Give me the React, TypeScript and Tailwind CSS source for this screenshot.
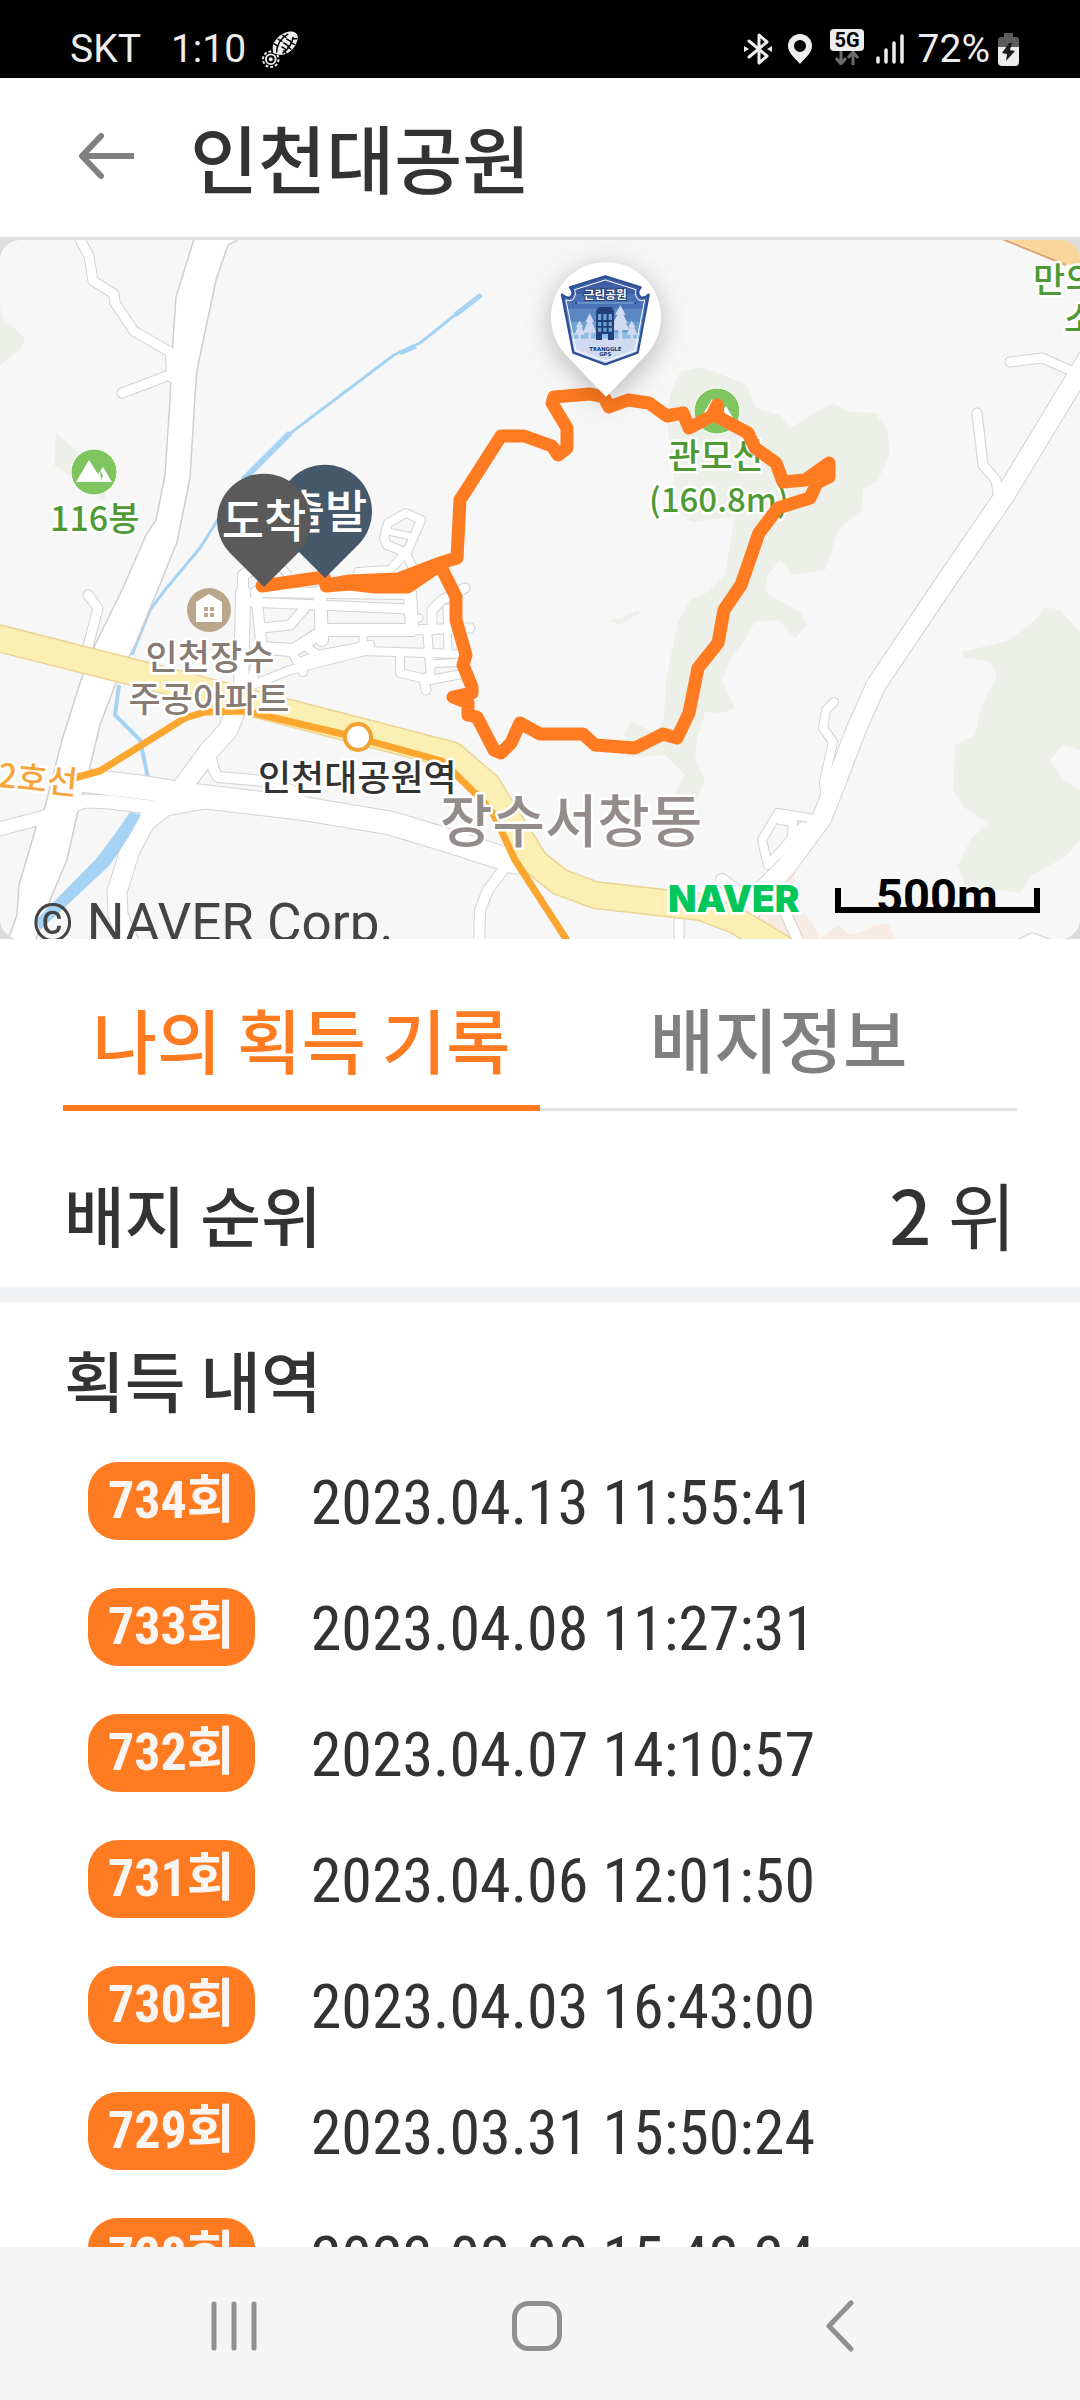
import { useState } from 'react';

interface BadgeRecord {
  count: number;
  date: string;
}

const records: BadgeRecord[] = [
  { count: 734, date: '2023.04.13 11:55:41' },
  { count: 733, date: '2023.04.08 11:27:31' },
  { count: 732, date: '2023.04.07 14:10:57' },
  { count: 731, date: '2023.04.06 12:01:50' },
  { count: 730, date: '2023.04.03 16:43:00' },
  { count: 729, date: '2023.03.31 15:50:24' },
  { count: 728, date: '2023.03.30 15:43:34' },
];

// [points, width]
const roads: [string, number][] = [
  ['78,236 89,256 93,281 114,294 115,303 134,331 170,352 172,378', 9],
  ['122,393 172,374', 9],
  ['88,595 98,608 87,650', 9],
  ['240,700 228,730 208,752 192,774 180,790 165,806 145,822 130,850 117,892 118,915 130,945', 19],
  ['80,780 140,787 190,795 232,800 300,808 390,823 440,838 515,862', 23],
  ['-5,830 45,817 85,801 110,802 165,809 215,800', 13],
  ['210,755 214,770 218,777 275,782 300,795', 10],
  ['503,870 488,890 480,910 479,945', 10],
  ['1088,358 1005,495 940,590 876,685 856,730 835,785 822,818 785,868 765,888 745,920', 19],
  ['1010,362 1042,358 1074,372', 9],
  ['977,413 983,465 996,480 999,500', 9],
  ['834,702 826,710 823,728 833,742 824,782 826,800', 8],
  ['810,818 778,813 762,840 768,865 803,826', 8],
  ['780,820 793,822 791,846', 8],
  ['722,880 735,890', 12],
  ['782,905 800,945', 10],
  ['679,920 679,945', 9],
  ['1020,944 1032,938 1048,944', 9],
];

const streets: [string, number][] = [
  ['243,592 241,690', 14],
  ['243,600 243,575 252,570', 10],
  ['256,592 262,650 250,685', 10],
  ['256,592 410,594', 10],
  ['250,602 410,609', 9],
  ['262,628 290,625 305,608', 9],
  ['320,592 322,640', 12],
  ['262,648 294,650 325,630 412,630', 12],
  ['410,592 412,630', 12],
  ['410,618 419,618', 7],
  ['300,662 318,655 370,645', 8],
  ['308,648 318,655', 8],
  ['250,686 290,670 365,651 460,654', 8],
  ['292,652 303,672', 8],
  ['363,632 363,650', 7],
  ['400,655 400,673 430,680 462,674', 8],
  ['424,678 426,690', 9],
  ['427,630 431,678', 8],
  ['447,608 448,652', 7],
  ['412,630 470,628', 9],
  ['432,630 432,610 442,600 465,588', 9],
  ['430,664 466,662', 7],
  ['358,572 390,570 408,550 421,520 406,513 388,523 384,538 387,545 405,552 418,578', 8],
  ['386,531 414,537', 6],
  ['262,578 262,565 275,560 288,575', 7],
];

const track =
  '262,586 324,577 326,585 350,581 398,579 440,563 457,558 460,500 501,436 524,436 552,446 558,455 567,448 567,428 552,403 554,397 590,394 604,397 609,407 628,400 649,403 667,416 683,413 689,428 712,416 717,405 718,417 748,433 755,448 776,463 783,482 805,480 829,463 829,477 817,483 810,498 778,508 759,533 741,585 724,610 718,643 698,668 689,713 677,738 663,734 635,748 595,745 583,734 540,734 520,723 511,743 501,753 494,750 477,717 468,715 468,703 453,697 472,693 472,687 463,665 466,655 456,620 456,597 440,565 408,587 375,587 350,584 326,586';

function MountainIcon({ x, y }: { x: number; y: number }) {
  return (
    <g transform={`translate(${x} ${y})`}>
      <circle r="23" fill="#7fc55f" stroke="#fff" strokeWidth="1" />
      <path d="M-18 10 L-5 -12 L4 2 L9 -5 L18 10 Z" fill="#fff" />
      <path d="M6 -2 L9 4 L7 8 Z" fill="#7fc55f" />
    </g>
  );
}

function LabelPin({ x, y, fill, label }: { x: number; y: number; fill: string; label: string }) {
  return (
    <g transform={`translate(${x} ${y})`}>
      <path d="M0 67 L-35 32 A47 47 0 1 1 35 32 Z" fill={fill} />
      <text y="17" textAnchor="middle" fontSize="46" fontWeight="500" fill="#fff">
        {label}
      </text>
    </g>
  );
}

function BadgePin() {
  return (
    <g>
      <path
        d="M606 397 L566 355 A55 55 0 1 1 646 355 Z"
        fill="#fff"
        className="drop-shadow-[0_6px_14px_rgba(0,0,0,0.25)]"
      />
      <g transform="translate(530 250) scale(0.3333)">
        <clipPath id="shield">
          <path d="M226 79 L332 112 Q317 128 332 142 Q345 146 356 134 L323 308 L226 343 L130 308 L96 134 Q108 146 121 142 Q135 128 120 112 Z" />
        </clipPath>
        <g clipPath="url(#shield)">
          <rect x="90" y="70" width="280" height="280" fill="#d0dbf1" />
          <rect x="90" y="70" width="280" height="196" fill="#8cbce6" />
          <rect x="90" y="70" width="280" height="178" fill="#6fa0d2" />
          <rect x="90" y="70" width="280" height="145" fill="#5b87c2" />
          <rect x="90" y="70" width="280" height="106" fill="#4a72b4" />
          <rect x="90" y="70" width="280" height="62" fill="#3f60a5" />
          <path
            d="M148 212 l-10 20 h5 l-10 22 h12 v14 h8 v-14 h12 l-10 -22 h5 Z M179 190 l-13 26 h6 l-13 32 h16 v20 h8 v-20 h16 l-13 -32 h6 Z M271 166 l-16 28 h7 l-13 26 h6 l-12 20 h22 v28 h12 v-28 h24 l-14 -20 h6 l-13 -26 h7 Z M305 212 l-10 20 h5 l-10 22 h12 v14 h8 v-14 h12 l-10 -22 h5 Z"
            fill="#d0dbf1"
          />
          <path d="M198 270 V182 L206 171 H244 L252 182 V270 H234 V252 H216 V270 Z" fill="#213f78" />
          <path
            d="M204 192h10v18h-10z M220 192h10v18h-10z M236 192h10v18h-10z M204 216h10v12h-10z M220 216h10v12h-10z M236 216h10v12h-10z M204 233h10v12h-10z M220 233h10v12h-10z M236 233h10v12h-10z"
            fill="#6fa0d2"
          />
        </g>
        <path
          d="M226 79 L332 112 Q317 128 332 142 Q345 146 356 134 L323 308 L226 343 L130 308 L96 134 Q108 146 121 142 Q135 128 120 112 Z"
          fill="none"
          stroke="#2f5096"
          strokeWidth="7"
          strokeLinejoin="round"
        />
        <path
          d="M226 90 L318 119 Q312 138 326 150 Q336 154 344 150 L315 302 L226 333 L138 302 L108 150 Q118 154 127 150 Q140 138 134 119 Z"
          fill="none"
          stroke="#fff"
          strokeWidth="3"
        />
        <path d="M140 159 H312" stroke="#7fb0dc" strokeWidth="3" />
        <circle cx="138" cy="159" r="3" fill="#213f78" />
        <circle cx="316" cy="159" r="3" fill="#213f78" />
        <text
          x="226"
          y="148"
          textAnchor="middle"
          fontSize="35"
          fontWeight="700"
          fill="#fff"
          stroke="#213f78"
          strokeWidth="6"
          className="[paint-order:stroke]"
        >
          근린공원
        </text>
        <g fill="#213f78" textAnchor="middle" fontWeight="700" fontSize="16" className="font-['DejaVu_Sans',sans-serif]">
          <text x="226" y="303">TRANGGLE</text>
          <text x="226" y="318">GPS</text>
        </g>
      </g>
    </g>
  );
}

function TrackMap() {
  return (
    <svg
      viewBox="0 240 1080 699"
      className="block h-auto w-full rounded-[20px] bg-[#f7f7f7] font-['Noto_Sans_CJK_KR',sans-serif]"
      role="img"
      aria-label="인천대공원"
    >
      {/* forest */}
      <g fill="#ecf0e8">
        <path d="M680 372 L672 390 L667 410 L668 430 L675 490 L680 512 L692 522 L735 516 L725 575 L708 592 L690 600 L678 622 L672 650 L666 680 L664 720 L655 733 L632 722 L624 733 L628 745 L625 757 L665 755 L685 775 L675 795 L697 798 L705 780 L695 760 L697 740 L705 712 L722 713 L735 708 L722 680 L730 660 L745 640 L755 622 L778 620 L795 638 L807 625 L800 612 L765 592 L768 575 L780 560 L793 575 L825 570 L832 550 L838 530 L862 510 L863 490 L878 480 L890 455 L887 428 L875 413 L850 412 L832 403 L815 413 L790 428 L780 415 L755 408 L747 385 L720 374 L700 367 Z" />
        <path d="M1045 607 L1035 620 L1010 640 L962 652 L965 658 L990 662 L997 675 L982 705 L975 735 L955 745 L953 790 L965 808 L988 823 L970 840 L958 865 L965 885 L1020 893 L1032 875 L1065 857 L1080 840 V790 L1063 780 L1050 760 L1063 745 L1080 750 V632 L1060 610 Z" />
        <path d="M0 305 L2 318 L25 338 L22 348 L0 365 Z M56 433 L70 445 L110 480 L104 500 L54 465 Z M610 620 L622 618 L638 610 L640 613 L620 625 Z" />
      </g>
      <path
        d="M786 866 L797 858 L792 900 L812 922 L820 939 L838 925 L850 935 L868 930 L872 926 L888 923 L895 939 H770 L745 915 Z"
        fill="#f8ebe3"
      />
      <path d="M1000 236 L1066 264 L1084 268 V236 Z" fill="#fad59a" />
      <path d="M1000 238 L1066 265" stroke="#dba36c" strokeWidth="2" />

      {/* water */}
      <g fill="none" stroke="#a6d3f4" strokeLinejoin="round">
        <path d="M481 295 L455 315 L420 343 L394 355 L345 392 L288 435" strokeWidth="3" />
        <path d="M455 315 L481 295 M416 346 L400 353" strokeWidth="5" />
        <path d="M290 433 L268 455 L243 480" strokeWidth="6" />
        <path d="M244 478 L200 548 L165 590 L150 610 L132 655" strokeWidth="3" />
        <path d="M119 685 L115 715 L140 740 L148 778" strokeWidth="4" />
      </g>

      {/* roads */}
      <g fill="none" strokeLinecap="round" strokeLinejoin="round">
        {[...roads, ...streets].map(([points, width]) => (
          <polyline key={points} points={points} stroke="#d2d2d2" strokeWidth={width + 2} />
        ))}
      </g>
      <path
        d="M195 236 L176 297 L172 355 L170 400 L165 475 L156 520 L146 535 L122 590 L95 645 L81 680 L62 740 L45 807 L37 824 L19 885 L17 915 L6 945 H34 L52 895 L67 860 L77 815 L88 775 L100 725 L117 680 L135 645 L161 582 L177 542 L190 478 L195 395 L197 370 L216 280 L228 245 L245 236 Z"
        fill="#fff"
        stroke="#cfcfcf"
        strokeWidth="1.5"
      />
      <g fill="none" stroke="#fff" strokeLinecap="round" strokeLinejoin="round">
        {[...roads, ...streets].map(([points, width]) => (
          <polyline key={points} points={points} strokeWidth={width} />
        ))}
      </g>
      <path d="M130 812 L141 815 L128 838 L110 865 L64 908 L40 930 L36 920 L95 860 L112 838 Z" fill="#a6d3f4" />

      {/* trunk road and metro line */}
      <g fill="none" strokeLinejoin="round">
        <polyline
          points="-10,636 140,674 290,713 452,755 487,785 512,825 535,862 560,882 595,895 700,907 735,920 785,950"
          stroke="#ead594"
          strokeWidth="28"
        />
        <polyline
          points="-10,636 140,674 290,713 452,755 487,785 512,825 535,862 560,882 595,895 700,907 735,920 785,950"
          stroke="#fcefb4"
          strokeWidth="25"
        />
        <polyline
          points="74,778 100,771 185,718 205,712 245,711 355,737 442,761 482,800 494,815 515,860 570,945"
          stroke="#faa62f"
          strokeWidth="7"
        />
      </g>
      <circle cx="358" cy="737" r="13" fill="#fff" stroke="#f2a02f" strokeWidth="4" />

      <MountainIcon x={94} y={472} />
      <MountainIcon x={717} y={411} />
      <circle cx="209" cy="610" r="22" fill="#baa68a" />
      <path d="M196 622 V602 L209 594 L222 602 V622 Z" fill="#fff" />
      <path d="M204 607h4v4h-4z M210 607h4v4h-4z M204 613h4v4h-4z M210 613h4v4h-4z" fill="#baa68a" />

      {/* place names */}
      <g stroke="#fff" strokeWidth="5" strokeLinejoin="round" fontWeight="500" className="[paint-order:stroke]">
        <g fill="#4f9a35" fontSize="35">
          <text x="50" y="531" fontSize="34">116봉</text>
          <text x="668" y="469">관모산</text>
          <text x="649" y="512" fontSize="33">(160.8m)</text>
          <text x="1033" y="293">만의</text>
          <text x="1064" y="332">소</text>
        </g>
        <g fill="#877b74" fontSize="35" textAnchor="middle">
          <text x="210" y="670">인천장수</text>
          <text x="209" y="712">주공아파트</text>
        </g>
        <text x="258" y="791" fill="#333" fontSize="36">인천대공원역</text>
        <text x="-3" y="787" fill="#f7a43c" fontSize="33" transform="rotate(6 0 787)">2호선</text>
        <text x="440" y="842" fill="#948c8b" fontSize="57">장수서창동</text>
      </g>

      <polyline
        points={track}
        fill="none"
        stroke="#ff7b22"
        strokeWidth="13"
        strokeLinecap="round"
        strokeLinejoin="round"
      />
      <LabelPin x={325} y={511} fill="#45596b" label="출발" />
      <LabelPin x={264} y={520} fill="#5a5a5a" label="도착" />
      <BadgePin />

      <text
        x="668"
        y="912"
        fontSize="37"
        fontWeight="900"
        fill="#03c75a"
        stroke="#fff"
        strokeWidth="5"
        className="font-['Inter',sans-serif] [paint-order:stroke]"
      >
        NAVER
      </text>
      <text x="876" y="912" fontSize="47" fontWeight="700" className="font-['Roboto',sans-serif]">500m</text>
      <path d="M838 888 V910 H1037 V888" fill="none" stroke="#000" strokeWidth="6" />
      <text x="32" y="941" fontSize="53" fill="#444" className="font-['Roboto',sans-serif]">© NAVER Corp.</text>
    </svg>
  );
}

function StatusBar() {
  return (
    <div className="flex h-[78px] shrink-0 items-center justify-between bg-black pt-5 pr-[61px] pl-[70px] font-['Roboto',sans-serif] text-[39px] leading-none text-[#ededed]">
      <div className="flex items-center">
        <span>SKT</span>
        <span className="ml-[30px]">1:10</span>
        {/* shoe print */}
        <svg viewBox="0 0 38 38" className="ml-4 size-[37px]" fill="none">
          <path d="M12 22 C8 14 16 4 26 1 C36 -1 39 5 35 13 C31 22 20 28 12 22 Z" fill="#ededed" />
          <path d="M15 22 C15 14 20 7 27 3 M21 23 C25 20 31 14 32 6" stroke="#000" strokeWidth="1.5" />
          <path d="M12 13 l5 3 M16 8 l5 3 M21 4 l4 3 M36 8 l-5 0 M34 14 l-5 -2 M30 19 l-4 -3 M25 23 l-3 -3 M20 16 l6 4 M22 12 l6 4 M25 8 l5 3" stroke="#000" strokeWidth="1.5" />
          <circle cx="9" cy="29" r="5" stroke="#ededed" strokeWidth="2" />
          <circle cx="9" cy="29" r="8" stroke="#ededed" strokeWidth="2" strokeDasharray="3 2" />
          <circle cx="9" cy="29" r="2" fill="#ededed" />
        </svg>
      </div>
      <div className="flex items-center">
        <svg viewBox="0 0 28 34" className="h-[34px] w-7" fill="none" stroke="#ededed" strokeWidth="3" strokeLinejoin="round" strokeLinecap="round">
          <path d="M5 9 L23 24 L15 31 V3 L23 10 L5 25" />
          <path d="M0 14 V20 L5 17 Z M28 14 V20 L23 17 Z" fill="#ededed" stroke="none" />
        </svg>
        <svg viewBox="0 0 24 30" className="ml-4 h-[30px] w-6">
          <path d="M12 0 A12 12 0 0 1 24 12 C24 19 17 24 12 30 C7 24 0 19 0 12 A12 12 0 0 1 12 0 Z M12 6 A6 6 0 1 0 12 18 A6 6 0 1 0 12 6 Z" fill="#ededed" />
        </svg>
        <div className="ml-[18px] flex flex-col items-center pb-1">
          <span className="rounded-sm bg-[#ededed] px-1 text-[20px] leading-[22px] font-bold text-black">5G</span>
          <svg viewBox="0 0 24 14" className="h-[14px] w-6" fill="none" stroke="#6b6b6b" strokeWidth="3">
            <path d="M6 0 V12 M1 7 L6 13 L11 7 M18 14 V2 M13 7 L18 1 L23 7" />
          </svg>
        </div>
        <svg viewBox="0 0 28 30" className="ml-3 h-[30px] w-7" stroke="#ededed" strokeWidth="3.500" strokeLinecap="round">
          <path d="M2 24 V28 M10 16 V28 M18 9 V28 M26 2 V28" />
        </svg>
        <span className="ml-[14px]">72%</span>
        <svg viewBox="0 0 21 33" className="ml-2 h-[33px] w-[21px]">
          <path d="M6 0 H15 V4 H18 Q21 4 21 7 V14 H0 V7 Q0 4 3 4 H6 Z" fill="#5c5c5c" />
          <path d="M0 14 H21 V29 Q21 33 17 33 H4 Q0 33 0 29 Z" fill="#ededed" />
          <path d="M11 10 H14 L12 17 L17 18 L8 28 L9 21 L4 20 Z" fill="#1c1c1c" />
        </svg>
      </div>
    </div>
  );
}

export default function App() {
  const [tab, setTab] = useState<'record' | 'info'>('record');

  return (
    <div className="flex h-screen flex-col bg-white font-['Noto_Sans_CJK_KR',sans-serif] text-[#333]">
      <StatusBar />

      <header className="flex h-[162px] shrink-0 items-center border-b-3 border-[#e2e2e2] pb-1 pl-[78px]">
        <button aria-label="뒤로" className="cursor-pointer">
          <svg viewBox="0 0 56 46" className="h-[46px] w-14" fill="none" stroke="#808080" strokeWidth="6" strokeLinecap="round" strokeLinejoin="round">
            <path d="M23 3 L4 23 L23 43" />
            <path d="M4 23 H56" strokeLinecap="butt" />
          </svg>
        </button>
        <h1 className="ml-14 text-[74px] leading-none font-medium">인천대공원</h1>
      </header>

      <div className="shrink-0 bg-[#dcdcdc]">
        <TrackMap />
      </div>

      <main className="flex min-h-0 flex-1 flex-col overflow-hidden">
        <div role="tablist" className="mx-[63px] grid shrink-0 grid-cols-2 text-[70px] leading-[100px] font-medium">
          <button
            role="tab"
            aria-selected={tab === 'record'}
            onClick={() => setTab('record')}
            className={`flex h-[172px] cursor-pointer items-end justify-center ${
              tab === 'record' ? 'border-b-6 border-[#ff7b22] pb-4 text-[#ff7b22]' : 'border-b-3 border-[#e2e2e2] pb-5 text-[#808080]'
            }`}
          >
            나의 획득 기록
          </button>
          <button
            role="tab"
            aria-selected={tab === 'info'}
            onClick={() => setTab('info')}
            className={`flex h-[172px] cursor-pointer items-end justify-center ${
              tab === 'info' ? 'border-b-6 border-[#ff7b22] pb-4 text-[#ff7b22]' : 'border-b-3 border-[#e2e2e2] pb-5 text-[#808080]'
            }`}
          >
            배지정보
          </button>
        </div>

        {/* Rank */}
        <section className="flex h-[191px] shrink-0 items-center justify-between border-b-15 border-[#f1f2f4] px-16 pt-7">
          <h2 className="text-[66px] leading-none font-medium">배지 순위</h2>
          <p className="text-[74px] leading-none">
            <span className="font-medium">2</span> 위
          </p>
        </section>

        {/* History */}
        <section className="shrink-0">
          <h2 className="px-16 pt-7 pb-9 text-[66px] leading-[96px] font-medium">획득 내역</h2>
          <ul className="grid gap-12 pl-[88px]">
            {records.map((record) => (
              <li key={record.count} className="flex items-center gap-14">
                <span className="flex h-[78px] items-center rounded-[30px] bg-[#ff7b22] px-5 font-['Roboto_Condensed','Liberation_Sans_Narrow','Noto_Sans_CJK_KR',sans-serif] text-[52px] leading-none font-bold text-[#f8f5f2]">
                  {record.count}회
                </span>
                <time className="pt-1 font-['Roboto_Condensed','Liberation_Sans_Narrow','Roboto',sans-serif] text-[62px] leading-none">
                  {record.date}
                </time>
              </li>
            ))}
          </ul>
        </section>
      </main>

      <nav className="grid h-[153px] shrink-0 grid-cols-3 place-items-center bg-[#f5f5f5] pt-1 pr-[89px] pl-[83px]">
        <button aria-label="최근 앱">
          <svg viewBox="0 0 46 50" className="h-[50px] w-[46px]" stroke="#909090" strokeWidth="5" strokeLinecap="round">
            <path d="M3 3 V47 M23 3 V47 M43 3 V47" />
          </svg>
        </button>
        <button aria-label="홈">
          <svg viewBox="0 0 50 50" className="size-[50px]" fill="none" stroke="#909090" strokeWidth="5">
            <rect x="2.500" y="2.500" width="45" height="45" rx="14" />
          </svg>
        </button>
        <button aria-label="이전">
          <svg viewBox="0 0 28 52" className="h-[52px] w-7" fill="none" stroke="#909090" strokeWidth="5" strokeLinecap="round" strokeLinejoin="round">
            <path d="M25 3 L3 26 L25 49" />
          </svg>
        </button>
      </nav>
    </div>
  );
}
